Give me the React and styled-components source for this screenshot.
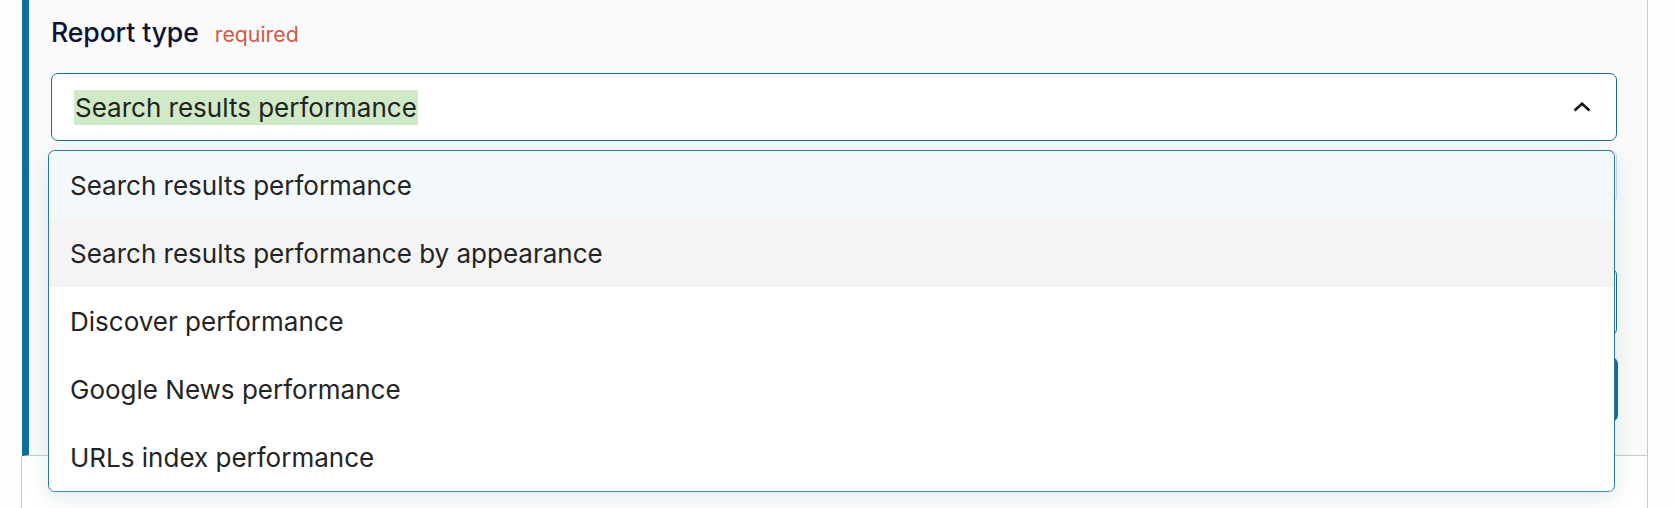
import React, { useState } from 'react'
import styled, { createGlobalStyle } from 'styled-components'

const options = [
  'Search results performance',
  'Search results performance by appearance',
  'Discover performance',
  'Google News performance',
  'URLs index performance'
]

const GlobalStyle = createGlobalStyle`
  html, body {
    margin: 0;
    padding: 0;
    background: #fdfdfd;
    font-family: Inter, "Liberation Sans", sans-serif;
    overflow: hidden;
  }
  * {
    box-sizing: border-box;
  }
`

const ChevronUp = () => (
  <svg width="18" height="10" viewBox="0 0 18 10" fill="none">
    <polyline points="1.5,8.5 9,1.8 16.5,8.5" stroke="#111" strokeWidth="2.6" strokeLinejoin="miter" />
  </svg>
)

const App = () => {
  const [selected] = useState(options[0])
  const [hovered, setHovered] = useState(1)

  return (
    <>
      <GlobalStyle />
      <Page>
        <Panel>
          <LabelRow>
            <Label>Report type</Label>
            <Required>required</Required>
          </LabelRow>
          <SelectWrap>
            <Select>
              <Value>{selected}</Value>
              <ChevronUp />
            </Select>
            <Menu>
              {options.map((option, i) => (
                <Option
                  key={option}
                  $selected={option === selected}
                  $hovered={i === hovered}
                  onMouseEnter={() => setHovered(i)}
                >
                  {option}
                </Option>
              ))}
            </Menu>
          </SelectWrap>
          <GhostInput />
          <FocusedInput />
          <SubmitButton />
        </Panel>
        <NextPanel />
      </Page>
    </>
  )
}

const Page = styled.div`
  width: 1676px;
  height: 508px;
  overflow: hidden;
`

const Panel = styled.section`
  margin-left: 22px;
  width: 1626px;
  padding: 16px 30px 33px 22px;
  background: #fafafa;
  border-left: 7px solid #0d6e98;
  border-right: 1px solid #c7cccf;
  border-bottom: 1px solid #c7cccf;
`

const LabelRow = styled.div`
  display: flex;
  align-items: baseline;
  gap: 16px;
  height: 32px;
  line-height: 32px;
`

const Label = styled.span`
  font-size: 26.6px;
  font-weight: 500;
  color: #0e1336;
  letter-spacing: -0.1px;
`

const Required = styled.span`
  font-size: 21.3px;
  color: #d05a48;
`

const SelectWrap = styled.div`
  position: relative;
  margin-top: 25px;
`

const Select = styled.div`
  display: flex;
  align-items: center;
  justify-content: space-between;
  height: 68px;
  padding: 0 25px 0 22px;
  background: #fff;
  border: 1px solid #1b6d95;
  border-radius: 7px;
`

const Value = styled.span`
  display: inline-block;
  height: 35px;
  line-height: 35px;
  padding: 0 1px;
  background: #d0eac7;
  font-size: 26px;
  color: #222;
`

const Menu = styled.ul`
  position: absolute;
  top: 77px;
  left: -3px;
  right: 2px;
  z-index: 5;
  margin: 0;
  padding: 0;
  list-style: none;
  background: #fff;
  border: 1px solid #2579a3;
  border-bottom-color: #3b8fbd;
  border-radius: 7px;
  overflow: hidden;
  box-shadow: 0 6px 22px rgba(40, 100, 130, 0.14);
`

const Option = styled.li`
  display: flex;
  align-items: center;
  height: 68px;
  padding-left: 21px;
  font-size: 26px;
  color: #242424;
  cursor: pointer;
  background: ${({ $selected, $hovered }) =>
    $hovered ? '#f4f4f4' : $selected ? '#f3f8fa' : '#fff'};
`

const GhostInput = styled.div`
  margin-top: 9px;
  height: 53px;
  border: 1px solid #cddde6;
  border-radius: 6px;
  background: #fff;
`

const FocusedInput = styled.div`
  margin-top: 65px;
  height: 68px;
  border: 1px solid #1b6d95;
  border-radius: 7px;
  background: #fff;
`

const SubmitButton = styled.div`
  margin-top: 21px;
  margin-right: -1px;
  height: 65px;
  border-radius: 7px;
  background: #0d6e98;
`

const NextPanel = styled.section`
  margin-left: 21px;
  width: 1627px;
  height: 60px;
  background: #fff;
  border-left: 1px solid #c7cccf;
  border-right: 1px solid #c7cccf;
`

export default App
